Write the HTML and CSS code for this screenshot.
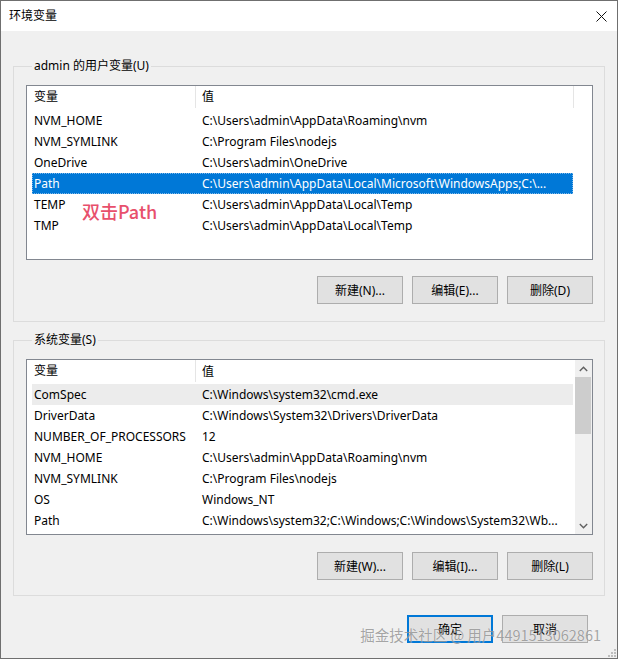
FILE: index.html
```html
<!DOCTYPE html>
<html lang="zh-CN">
<head>
<meta charset="utf-8">
<title>环境变量</title>
<link rel="stylesheet" href="styles.css">
</head>
<body>
<div class="window">
  <div class="titlebar">
    <span class="title">环境变量</span>
    <span class="close">
      <svg width="11" height="11" viewBox="0 0 11 11"><path d="M0.5 0.5 L10.5 10.5 M10.5 0.5 L0.5 10.5" stroke="#111" stroke-width="1" fill="none"/></svg>
    </span>
  </div>
  <div class="client">
    <fieldset class="group group-user">
      <legend>admin 的用户变量(U)</legend>
      <div class="list">
        <div class="list-body">
          <div class="header">
            <div class="hcell c1">变量</div>
            <div class="hcell c2">值</div>
          </div>
          <div class="row"><div class="cell c1">NVM_HOME</div><div class="cell c2">C:\Users\admin\AppData\Roaming\nvm</div></div>
          <div class="row"><div class="cell c1">NVM_SYMLINK</div><div class="cell c2">C:\Program Files\nodejs</div></div>
          <div class="row"><div class="cell c1">OneDrive</div><div class="cell c2">C:\Users\admin\OneDrive</div></div>
          <div class="row selected"><div class="cell c1">Path</div><div class="cell c2">C:\Users\admin\AppData\Local\Microsoft\WindowsApps;C:\...</div></div>
          <div class="row"><div class="cell c1">TEMP</div><div class="cell c2">C:\Users\admin\AppData\Local\Temp</div></div>
          <div class="row"><div class="cell c1">TMP</div><div class="cell c2">C:\Users\admin\AppData\Local\Temp</div></div>
        </div>
        <span class="note">双击Path</span>
      </div>
      <div class="buttons">
        <button class="btn">新建(N)...</button>
        <button class="btn">编辑(E)...</button>
        <button class="btn">删除(D)</button>
      </div>
    </fieldset>

    <fieldset class="group group-system">
      <legend>系统变量(S)</legend>
      <div class="list list-scroll">
        <div class="list-body">
          <div class="header">
            <div class="hcell c1">变量</div>
            <div class="hcell c2">值</div>
          </div>
          <div class="row hover"><div class="cell c1">ComSpec</div><div class="cell c2">C:\Windows\system32\cmd.exe</div></div>
          <div class="row"><div class="cell c1">DriverData</div><div class="cell c2">C:\Windows\System32\Drivers\DriverData</div></div>
          <div class="row"><div class="cell c1">NUMBER_OF_PROCESSORS</div><div class="cell c2">12</div></div>
          <div class="row"><div class="cell c1">NVM_HOME</div><div class="cell c2">C:\Users\admin\AppData\Roaming\nvm</div></div>
          <div class="row"><div class="cell c1">NVM_SYMLINK</div><div class="cell c2">C:\Program Files\nodejs</div></div>
          <div class="row"><div class="cell c1">OS</div><div class="cell c2">Windows_NT</div></div>
          <div class="row"><div class="cell c1">Path</div><div class="cell c2">C:\Windows\system32;C:\Windows;C:\Windows\System32\Wb...</div></div>
        </div>
        <div class="scrollbar">
          <div class="arrow">
            <svg width="9" height="6" viewBox="0 0 9 6"><path d="M0.8 5 L4.5 1.3 L8.2 5" stroke="#606060" stroke-width="1.4" fill="none"/></svg>
          </div>
          <div class="track"><div class="thumb"></div></div>
          <div class="arrow">
            <svg width="9" height="6" viewBox="0 0 9 6"><path d="M0.8 1 L4.5 4.7 L8.2 1" stroke="#606060" stroke-width="1.4" fill="none"/></svg>
          </div>
        </div>
      </div>
      <div class="buttons">
        <button class="btn">新建(W)...</button>
        <button class="btn">编辑(I)...</button>
        <button class="btn">删除(L)</button>
      </div>
    </fieldset>

    <div class="footer">
      <button class="btn btn-default">确定</button>
      <button class="btn">取消</button>
    </div>
  </div>
  <span class="watermark">掘金技术社区 @ 用户4491513062861</span>
  <svg class="grip" width="8" height="8" viewBox="0 0 8 8">
    <rect x="6" y="0" width="2" height="2" fill="#bdbdbd"/>
    <rect x="3" y="3" width="2" height="2" fill="#bdbdbd"/>
    <rect x="6" y="3" width="2" height="2" fill="#bdbdbd"/>
    <rect x="0" y="6" width="2" height="2" fill="#bdbdbd"/>
    <rect x="3" y="6" width="2" height="2" fill="#bdbdbd"/>
    <rect x="6" y="6" width="2" height="2" fill="#bdbdbd"/>
  </svg>
</div>
</body>
</html>
```

FILE: styles.css
```css
* { box-sizing: border-box; }

html, body {
  margin: 0;
  padding: 0;
  background: #f0f0f0;
}

body {
  font-family: "Noto Sans", "Noto Sans CJK SC", sans-serif;
  font-size: 12px;
  color: #000;
}

.window {
  position: relative;
  width: 618px;
  height: 659px;
  border: 1px solid #6f6f6f;
  background: #f0f0f0;
  display: flex;
  flex-direction: column;
  overflow: hidden;
}

.titlebar {
  height: 30px;
  flex: none;
  background: #fff;
  display: flex;
  align-items: center;
  justify-content: space-between;
  padding: 0 10px 0 8px;
}

.title {
  font-size: 12px;
  line-height: 16px;
}

.close {
  display: flex;
  align-items: center;
  margin-top: 1px;
}

.client {
  display: flex;
  flex-direction: column;
  padding: 0 12px;
}

.group {
  margin: 0;
  border: 1px solid #dcdcdc;
  padding: 0 11px 0 12px;
  min-width: 0;
}

.group legend {
  margin-left: 6px;
  padding: 0 2px;
  line-height: 16px;
  font-size: 12px;
}

.group-user {
  margin-top: 27px;
  padding-bottom: 17px;
}

.group-system {
  margin-top: 10px;
  padding-bottom: 15px;
}

.list {
  position: relative;
  margin-top: 11px;
  height: 175px;
  border: 1px solid #828790;
  background: #fff;
  display: flex;
}

.list-scroll {
  height: 176px;
}

.list-body {
  flex: 1;
  min-width: 0;
  padding-left: 5px;
}

.header {
  height: 24px;
  display: flex;
  align-items: stretch;
}

.hcell {
  display: flex;
  align-items: center;
  line-height: 16px;
  padding-bottom: 1px;
}

.hcell.c1 {
  width: 164px;
  padding-left: 2px;
  border-right: 1px solid #e5e5e5;
  margin-bottom: 2px;
}

.group-user .hcell.c2 {
  width: 378px;
  border-right: 1px solid #e5e5e5;
  margin-bottom: 2px;
}

.hcell.c2 {
  padding-left: 6px;
}

.row {
  display: flex;
  width: 541px;
  height: 21px;
  line-height: 21px;
  white-space: nowrap;
}

.cell {
  overflow: hidden;
}

.cell.c1 {
  width: 164px;
  padding-left: 2px;
}

.cell.c2 {
  width: 377px;
  padding-left: 6px;
}

.row.selected {
  background: #0078d7;
  color: #fff;
  outline: 1px dotted #7fb8e8;
  outline-offset: -1px;
}

.row.hover {
  background: #ececec;
}

.note {
  position: absolute;
  left: 55px;
  top: 115px;
  font-size: 18px;
  line-height: 20px;
  font-weight: 500;
  color: #e8506c;
  font-family: "Noto Sans CJK SC", "Noto Sans", sans-serif;
}

.scrollbar {
  width: 17px;
  flex: none;
  background: #f0f0f0;
  display: flex;
  flex-direction: column;
}

.arrow {
  height: 17px;
  display: flex;
  align-items: center;
  justify-content: center;
  flex: none;
}

.track {
  flex: 1;
  padding: 0 1px 0 0;
}

.thumb {
  height: 57px;
  background: #cdcdcd;
}

.buttons {
  display: flex;
  justify-content: flex-end;
  gap: 9px;
  margin-top: 16px;
}

.group-system .buttons {
  margin-top: 17px;
}

.btn {
  width: 86px;
  height: 28px;
  margin: 0;
  padding: 0;
  border: 1px solid #adadad;
  background: #e1e1e1;
  font-family: "Noto Sans", "Noto Sans CJK SC", sans-serif;
  font-size: 12px;
  color: #000;
}

.footer {
  display: flex;
  justify-content: flex-end;
  gap: 9px;
  margin-top: 19px;
  padding-right: 17px;
}

.btn-default {
  border: 2px solid #0078d7;
}

.watermark {
  position: absolute;
  right: 16px;
  top: 624px;
  font-size: 14.5px;
  line-height: 20px;
  color: rgba(90, 90, 90, 0.55);
  text-shadow: 0 0 1px rgba(255, 255, 255, 0.8);
  font-family: "Noto Sans CJK SC", "Noto Sans", sans-serif;
  white-space: nowrap;
}

.grip {
  position: absolute;
  right: 1px;
  bottom: 1px;
}
```
